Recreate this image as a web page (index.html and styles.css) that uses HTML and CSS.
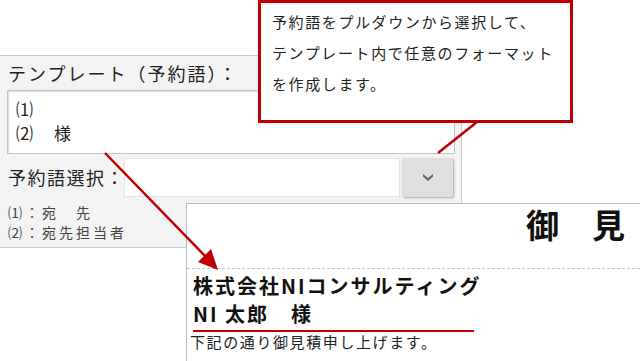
FILE: index.html
```html
<!DOCTYPE html>
<html lang="ja">
<head>
    <meta charset="UTF-8">
    <title>予約語テンプレート</title>
    <link rel="stylesheet" href="styles.css">
</head>
<body>
    <div class="stage">
        <section class="panel">
            <div class="panel-title">テンプレート（予約語）：</div>
            <div class="template-box">
                <div>⑴</div>
                <div>⑵　様</div>
            </div>
            <div class="select-row">
                <span class="select-label">予約語選択：</span>
                <span class="select-input"></span>
                <span class="select-btn">
                    <svg width="12" height="9" viewBox="0 0 12 9"><polygon points="1,1 6,5 11,1 11,3.5 6,8 1,3.5" fill="#666"/></svg>
                </span>
            </div>
            <div class="legend">
                <div>⑴：宛　先</div>
                <div>⑵：宛先担当者</div>
            </div>
        </section>

        <div class="callout">
            <p>予約語をプルダウンから選択して、</p>
            <p>テンプレート内で任意のフォーマット</p>
            <p>を作成します。</p>
        </div>

        <div class="doc">
            <div class="doc-head">御　見</div>
            <div class="doc-body">
                <div class="company">株式会社NIコンサルティング</div>
                <div class="person">NI 太郎　様</div>
                <div class="doc-text">下記の通り御見積申し上げます。</div>
            </div>
        </div>

        <svg class="arrows" width="640" height="361" viewBox="0 0 640 361">
            <line x1="477" y1="122" x2="438" y2="153" stroke="#c00000" stroke-width="2.5"/>
            <line x1="105" y1="153" x2="207" y2="258" stroke="#c00000" stroke-width="2.5"/>
            <polygon points="218,270 198,262 211,249" fill="#c00000"/>
        </svg>
    </div>
</body>
</html>
```

FILE: styles.css
```css
* {
    box-sizing: border-box;
}
body {
    margin: 0;
    background-color: #ffffff;
    font-family: "Noto Sans CJK JP", "Noto Sans", sans-serif;
    color: #222222;
}
.stage {
    position: relative;
    width: 640px;
    height: 361px;
    overflow: hidden;
}
.panel {
    margin-top: 55px;
    width: 462px;
    height: 193px;
    padding: 0 6px;
    background-color: #f3f3f3;
    border: 1px solid #c9c9c9;
    border-left: none;
}
.panel-title {
    height: 34px;
    line-height: 34px;
    padding-left: 2px;
    font-size: 18px;
    letter-spacing: 2px;
}
.template-box {
    margin-left: 1px;
    height: 64px;
    padding: 6px 8px;
    background-color: #ffffff;
    border: 1px solid #c2c2c2;
    box-shadow: inset 1px 1px 1px #dddddd;
    font-size: 17px;
    line-height: 24px;
    letter-spacing: 2px;
}
.select-row {
    display: flex;
    align-items: center;
    gap: 2px;
    margin-top: 3px;
    height: 40px;
}
.select-label {
    width: 116px;
    padding-left: 2px;
    font-size: 18px;
    letter-spacing: 1.5px;
    white-space: nowrap;
}
.select-input {
    width: 276px;
    height: 39px;
    background-color: #ffffff;
    border: 1px solid #e2e2e2;
}
.select-btn {
    display: flex;
    justify-content: center;
    align-items: center;
    width: 51px;
    height: 39px;
    background-color: #e0e0e0;
    border-radius: 2px;
    box-shadow: 1px 1px 2px rgba(0, 0, 0, 0.3);
}
.legend {
    margin-top: 5px;
    padding-left: 2px;
    font-size: 14px;
    line-height: 20px;
    letter-spacing: 3px;
    color: #444444;
}
.callout {
    position: absolute;
    left: 258px;
    top: 0;
    width: 315px;
    height: 123px;
    padding: 3px 0 0 11px;
    background-color: #ffffff;
    border: 3px solid #c00000;
    font-size: 15px;
    letter-spacing: 1.6px;
}
.callout p {
    margin: 0;
    line-height: 31px;
}
.doc {
    position: absolute;
    left: 186px;
    top: 203px;
    width: 460px;
    height: 160px;
    background-color: #ffffff;
    border: 1px solid #bbbbbb;
}
.doc-head {
    height: 65px;
    padding-right: 20px;
    padding-top: 2px;
    text-align: right;
    font-size: 33px;
    font-weight: bold;
    line-height: 36px;
    color: #111111;
    border-bottom: 1px dashed #c4c4c4;
}
.doc-body {
    padding: 3px 0 0 6px;
}
.company, .person {
    font-size: 20px;
    font-weight: bold;
    line-height: 28px;
    letter-spacing: 2px;
    color: #111111;
}
.person {
    width: 281px;
    height: 32px;
    border-bottom: 2px solid #c00000;
}
.doc-text {
    margin-left: -3px;
    font-size: 15px;
    line-height: 20px;
    letter-spacing: 1.6px;
}
.arrows {
    position: absolute;
    left: 0;
    top: 0;
}
```
